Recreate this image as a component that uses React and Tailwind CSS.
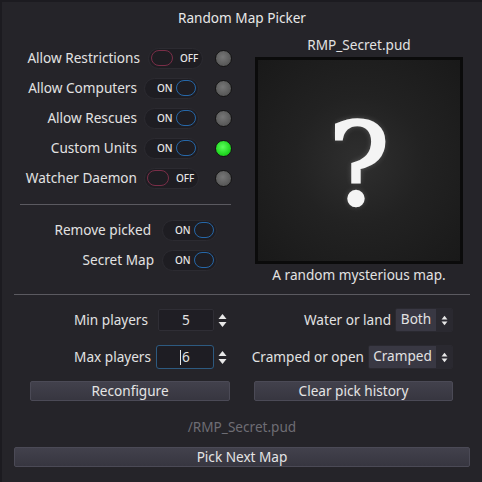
import React from 'react';

const Toggle = ({ on }) => (
  <div className="flex h-[21px] w-[55px] items-center rounded-full border border-[#2c2b31] bg-[#1e1d22] px-[2px]">
    {on ? (
      <>
        <span className="ml-[10px] w-[12px] text-[10px] font-medium leading-none text-[#e6e6e6]">ON</span>
        <span className="ml-[7px] h-[16px] w-[22px] rounded-full border-[1.5px] border-[#2667a8]" />
      </>
    ) : (
      <>
        <span className="h-[16px] w-[22px] rounded-full border-[1.5px] border-[#7a2e48]" />
        <span className="ml-[7px] text-[10px] font-medium leading-none text-[#e6e6e6]">OFF</span>
      </>
    )}
  </div>
);

const Led = ({ lit }) => (
  <div
    className={
      lit
        ? 'h-[17px] w-[17px] rounded-full border-[1.5px] border-[#151515] bg-[radial-gradient(circle_at_45%_40%,#5cff5c_0%,#22d822_60%,#17a817_100%)]'
        : 'h-[17px] w-[17px] rounded-full border-[1.5px] border-[#151515] bg-[radial-gradient(circle_at_45%_40%,#777_0%,#5c5c5c_60%,#4a4a4a_100%)]'
    }
  />
);

const Arrows = ({ small }) => (
  <svg width={small ? 7 : 9} height={small ? 11 : 15} viewBox="0 0 9 15" className="text-[#e8e8e8]">
    <path d="M4.5 1 L8.5 6 L0.5 6 Z" fill="currentColor" />
    <path d="M4.5 14 L8.5 9 L0.5 9 Z" fill="currentColor" />
  </svg>
);

const Spin = ({ value, focused }) => (
  <div className="flex shrink-0 items-center">
    {focused ? (
      <div className="flex h-[24px] w-[58px] items-center justify-center rounded-[3px] border border-[#2d5a80] bg-[#1e1d23]">
        <span className="mr-[1px] h-[15px] w-px bg-[#e8e8e8]" />
        <span>{value}</span>
      </div>
    ) : (
      <div className="flex h-[22px] w-[56px] items-center justify-center rounded-[2px] border border-[#2f2e35] bg-[#1f1e24]">
        {value}
      </div>
    )}
    <div className="flex w-[16px] justify-center">
      <Arrows />
    </div>
  </div>
);

const Combo = ({ value, width }) => (
  <div className={`flex h-[24px] shrink-0 ${width} overflow-hidden rounded-[2px] border border-[#2a2930]`}>
    <div className="flex flex-1 items-center justify-center bg-[#393843] pb-px">{value}</div>
    <div className="flex w-[16px] items-center justify-center bg-[#2a2930]">
      <Arrows small />
    </div>
  </div>
);

const Button = ({ children, className }) => (
  <div
    className={`flex h-[20px] items-center justify-center rounded-[2px] border border-[#4b4a56] bg-gradient-to-b from-[#42414c] to-[#373640] leading-none text-[#e4e4e4] ${className}`}
  >
    {children}
  </div>
);

const rows = [
  { label: 'Allow Restrictions', on: false, lit: false, lw: 'w-[138px]', tm: 'ml-[8px]', im: 'ml-[12px]' },
  { label: 'Allow Computers', on: true, lit: false, lw: 'w-[135px]', tm: 'ml-[7px]', im: 'ml-[16px]' },
  { label: 'Allow Rescues', on: true, lit: false, lw: 'w-[135px]', tm: 'ml-[7px]', im: 'ml-[16px]' },
  { label: 'Custom Units', on: true, lit: true, lw: 'w-[135px]', tm: 'ml-[7px]', im: 'ml-[16px]' },
  { label: 'Watcher Daemon', on: false, lit: false, lw: 'w-[135px]', tm: 'ml-[7px]', im: 'ml-[16px]' },
];

export default function App() {
  return (
    <div
      className="flex h-[482px] w-[482px] flex-col border-l-2 border-t-2 border-[#1c1b20] bg-[#252429] text-[13.6px] text-[#e2e2e2]"
      style={{ fontFamily: '"Noto Sans", "DejaVu Sans", sans-serif' }}
    >
      <div className="flex h-[33px] items-center justify-center text-[#e8e8e8]">Random Map Picker</div>

      <div className="flex">
        {/* left side: switches */}
        <div className="flex w-[238px] flex-col pt-[8px]">
          {rows.map((r) => (
            <div key={r.label} className="flex h-[30px] items-center">
              <span className={`${r.lw} whitespace-nowrap text-right`}>{r.label}</span>
              <div className={r.tm}>
                <Toggle on={r.on} />
              </div>
              <div className={r.im}>
                <Led lit={r.lit} />
              </div>
            </div>
          ))}
          <div className="ml-[18px] mt-[11px] h-px w-[211px] bg-[#5b5a60]" />
          <div className="mt-[10px] flex h-[30px] items-center">
            <span className="w-[149px] whitespace-nowrap text-right">Remove picked</span>
            <div className="ml-[11px]">
              <Toggle on />
            </div>
          </div>
          <div className="flex h-[30px] items-center">
            <span className="w-[152px] whitespace-nowrap text-right">Secret Map</span>
            <div className="ml-[8px]">
              <Toggle on />
            </div>
          </div>
        </div>

        {/* right side: preview */}
        <div className="flex flex-col items-center pl-[15px]">
          <div className="mt-px flex h-[18px] items-center">RMP_Secret.pud</div>
          <div className="mt-[3px] flex h-[207px] w-[208px] items-center justify-center border-[3px] border-[#0b0b0b] bg-[radial-gradient(circle,#2f2f2f_0%,#222_45%,#191919_100%)]">
            <span
              className="pt-[8px] text-[114px] font-normal leading-none text-[#f4f4f4]"
              style={{
                fontFamily: '"DejaVu Serif", serif',
                WebkitTextStroke: '2.5px #f4f4f4',
                textShadow: '0 0 6px rgba(255,255,255,0.3)',
              }}
            >
              ?
            </span>
          </div>
          <div className="mt-[2px] flex h-[18px] items-center whitespace-nowrap">A random mysterious map.</div>
        </div>
      </div>

      <div className="ml-[12px] mt-[10px] h-px w-[456px] bg-[#5b5a60]" />

      <div className="ml-[28px] mt-[13px] grid w-[423px] grid-cols-[200px_199px] gap-x-[24px]">
        <div className="flex h-[24px] items-center justify-end">
          <span className="mr-[10px] whitespace-nowrap">Min players</span>
          <Spin value="5" />
        </div>
        <div className="flex h-[24px] items-center justify-end">
          <span className="mr-[4px] whitespace-nowrap">Water or land</span>
          <Combo value="Both" width="w-[58px]" />
        </div>

        <div className="mt-[13px] flex h-[24px] items-center justify-end">
          <span className="mr-[5px] whitespace-nowrap">Max players</span>
          <Spin value="6" focused />
        </div>
        <div className="mt-[13px] flex h-[24px] items-center justify-end">
          <span className="mr-[4px] whitespace-nowrap">Cramped or open</span>
          <Combo value="Cramped" width="w-[85px]" />
        </div>

        <Button className="mt-[12px]">Reconfigure</Button>
        <Button className="mt-[12px]">Clear pick history</Button>
      </div>

      <div className="mt-[17px] flex h-[18px] items-center justify-center text-[#6e6d74]">/RMP_Secret.pud</div>

      <Button className="ml-[12px] mt-[11px] w-[456px]">Pick Next Map</Button>
    </div>
  );
}
